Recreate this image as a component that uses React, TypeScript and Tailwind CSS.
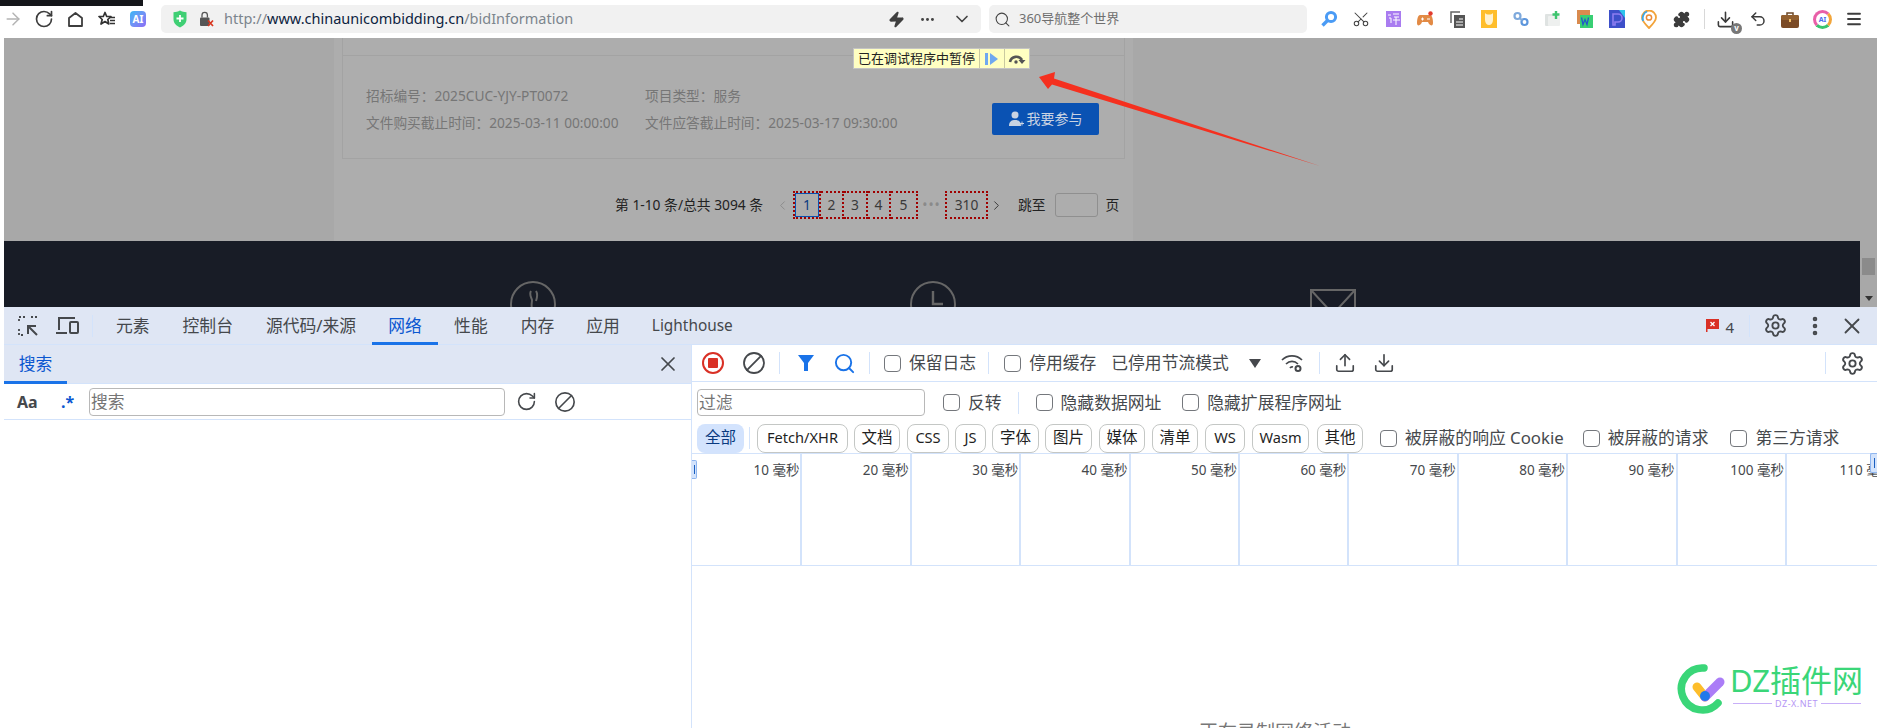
import { ArrowRight, ChevronDown, ChevronLeft, ChevronRight, Download, EllipsisVertical, Menu, Puzzle, RotateCw, Scissors, Search, Settings, Undo2, Upload, X, Zap, Ban, MoreHorizontal } from "lucide-react";

const FONT = "font-['Noto_Sans','Noto_Sans_CJK_SC',sans-serif]";

function Checkbox({ label, className = "" }: { label: string; className?: string }) {
  return (
    <div className={`flex items-center ${className}`}>
      <span className="h-[17px] w-[17px] shrink-0 rounded-[4px] border-[1.5px] border-[#74777c] bg-white" />
      <span className="ml-[8px] whitespace-nowrap text-[16.8px] text-[#46494d]">{label}</span>
    </div>
  );
}

function Divider({ className = "" }: { className?: string }) {
  return <span className={`h-[22px] w-px shrink-0 bg-[#d3e3fb] ${className}`} />;
}

const chips = [
  { label: "Fetch/XHR", w: "w-[91px]", ml: "ml-0", text: "text-[14.6px]" },
  { label: "文档", w: "w-[46px]", ml: "ml-[6px]", text: "text-[15.5px]" },
  { label: "CSS", w: "w-[42px]", ml: "ml-[7px]", text: "text-[14.6px]" },
  { label: "JS", w: "w-[31px]", ml: "ml-[6px]", text: "text-[14.6px]" },
  { label: "字体", w: "w-[47px]", ml: "ml-[6px]", text: "text-[15.5px]" },
  { label: "图片", w: "w-[47px]", ml: "ml-[6px]", text: "text-[15.5px]" },
  { label: "媒体", w: "w-[46px]", ml: "ml-[7px]", text: "text-[15.5px]" },
  { label: "清单", w: "w-[46px]", ml: "ml-[7px]", text: "text-[15.5px]" },
  { label: "WS", w: "w-[40px]", ml: "ml-[7px]", text: "text-[14.6px]" },
  { label: "Wasm", w: "w-[57px]", ml: "ml-[7px]", text: "text-[14.6px]" },
  { label: "其他", w: "w-[46px]", ml: "ml-[8px]", text: "text-[15.5px]" },
];

const tabs = [
  { label: "元素", cls: "ml-[23px]" },
  { label: "控制台", cls: "ml-[33px]" },
  { label: "源代码/来源", cls: "ml-[33px]" },
];

const pages = [
  { n: "2", w: "w-[23px]" },
  { n: "3", w: "w-[24px]" },
  { n: "4", w: "w-[23px]" },
  { n: "5", w: "w-[27px]" },
];

const ticks = [10, 20, 30, 40, 50, 60, 70, 80, 90, 100, 110];

function IconBox({ children, className = "" }: { children: React.ReactNode; className?: string }) {
  return <span className={`flex h-[20px] w-[20px] shrink-0 items-center justify-center ${className}`}>{children}</span>;
}

function ExtensionIcons() {
  return (
    <div className="ml-[12px] flex items-center gap-[12px]">
      <IconBox>
        <svg width="18" height="18" viewBox="0 0 18 18"><circle cx="11" cy="7" r="4.6" fill="none" stroke="#4a9bf5" strokeWidth="3" /><path d="M7.5 10.5 2.5 15.5" stroke="#4a9bf5" strokeWidth="3.4" /></svg>
      </IconBox>
      <IconBox><Scissors size={18} strokeWidth={1.4} color="#444" className="-rotate-90" /></IconBox>
      <IconBox>
        <svg width="15" height="16" viewBox="0 0 15 16"><rect width="15" height="16" fill="#a97cf0" /><path d="M2 4h3M3 7h2v5M7 3h6M8 6h5M7 9h7M10 6v8" stroke="#fff" strokeWidth="1" fill="none" /></svg>
      </IconBox>
      <IconBox>
        <svg width="18" height="17" viewBox="0 0 18 17"><path d="M4 4h10c2 0 3 4 3 8 0 3-2 3-4 1l-1-2H6l-1 2c-2 2-4 2-4-1 0-4 1-8 3-8z" fill="#e28a45" /><circle cx="14.5" cy="2.5" r="2.2" fill="#e23b2e" /><path d="M5 8h3M6.500 6.500v3M11 8h3" stroke="#fff" strokeWidth="1" /></svg>
      </IconBox>
      <IconBox>
        <svg width="15" height="17" viewBox="0 0 15 17"><path d="M1 12V1h9" fill="none" stroke="#666" strokeWidth="1.500" /><rect x="4" y="4" width="11" height="13" fill="#555" /><path d="M9 8h4M6 11h7M6 14h7" stroke="#fff" strokeWidth="1.200" /></svg>
      </IconBox>
      <IconBox>
        <svg width="16" height="18" viewBox="0 0 16 18"><rect width="16" height="18" fill="#ffbe2c" /><path d="M4 3c1 1 2 1.500 4 1.500S11 4 12 3v7c0 3-2 5-4 5s-4-2-4-5z" fill="#fff2d0" /></svg>
      </IconBox>
      <IconBox>
        <svg width="18" height="18" viewBox="0 0 18 18"><circle cx="5.500" cy="6" r="3" fill="none" stroke="#7ea9dc" strokeWidth="2.200" /><circle cx="12.500" cy="12" r="3" fill="none" stroke="#5d96dc" strokeWidth="2.200" /><path d="M7.500 8l3 2.500" stroke="#7ea9dc" strokeWidth="2" /></svg>
      </IconBox>
      <IconBox>
        <svg width="18" height="18" viewBox="0 0 18 18"><rect x="1" y="4" width="13" height="12" rx="1" fill="#dfe3e2" /><rect x="4" y="6" width="12" height="10" rx="1" fill="#eef0ef" /><path d="M12 1v8M8.500 4.500h7" stroke="#3fc46f" strokeWidth="2.400" /></svg>
      </IconBox>
      <IconBox>
        <svg width="16" height="18" viewBox="0 0 16 18"><rect width="13" height="14" fill="#d98a4e" /><rect x="3" y="5" width="13" height="13" fill="#38cf74" /><path d="M4.500 7.500l1.500 7 2-5 2 5 1.500-7" fill="none" stroke="#2456c9" strokeWidth="1.300" /></svg>
      </IconBox>
      <IconBox>
        <svg width="16" height="18" viewBox="0 0 16 18"><rect width="16" height="18" fill="#3d4fc9" /><path d="M10 0h6v8z" fill="#2ec3ec" /><path d="M4 4h5a4 4 0 0 1 0 8H6v3H4z" fill="none" stroke="#8d7cf0" strokeWidth="1.600" /></svg>
      </IconBox>
      <IconBox>
        <svg width="16" height="19" viewBox="0 0 16 19"><path d="M8 18C4 14 1 11 1 7.500a7 7 0 0 1 14 0C15 11 12 14 8 18z" fill="none" stroke="#f2a33a" strokeWidth="1.800" /><path d="M2 11C1 8 2 3 6 1.500" fill="none" stroke="#3aa6e8" strokeWidth="1.800" /><circle cx="8" cy="7.500" r="2.600" fill="none" stroke="#ec8a35" strokeWidth="1.500" /></svg>
      </IconBox>
      <IconBox><Puzzle size={17} fill="#3c3c3c" color="#3c3c3c" /></IconBox>
    </div>
  );
}

export default function App() {
  return (
    <div className={`relative flex h-[728px] w-[1877px] flex-col overflow-hidden bg-white ${FONT}`}>
      {/* browser toolbar */}
      <header className="relative flex h-[38px] shrink-0 items-center bg-white">
        <span className="absolute left-0 top-0 h-[6px] w-[143px] bg-[#15161a]" />
        <ArrowRight size={20} strokeWidth={1.8} color="#b4b4b4" className="ml-[3px] shrink-0" />
        <RotateCw size={20} strokeWidth={2} color="#3d3d3d" className="ml-[11px] shrink-0" />
        <svg width="15" height="15" viewBox="0 0 15 15" className="ml-[14px] shrink-0"><path d="M1 14V6l6.500-5L14 6v8z" fill="none" stroke="#3d3d3d" strokeWidth="1.800" strokeLinejoin="round" /></svg>
        <svg width="18" height="17" viewBox="0 0 18 17" className="ml-[15px] shrink-0"><path d="M7 1.500l1.700 4H13L9.800 8.500l1 4.500L7 10.500 3 13l1.200-4.500L1 5.500h4.300z" fill="none" stroke="#333" strokeWidth="1.700" strokeLinejoin="round" /><path d="M12 6.500h5M12 9.500h5M12 12.500h5" stroke="#333" strokeWidth="1.500" /></svg>
        <span className="ml-[14px] flex h-[16px] w-[16px] shrink-0 items-center justify-center rounded-[4px] bg-gradient-to-br from-[#2fb6f5] to-[#8a6cf5] text-[10px] font-bold leading-none text-white">AI</span>
        <div className="ml-[15px] flex h-[28px] w-[820px] shrink-0 items-center rounded-[5px] bg-[#f1f1f1]">
          <svg width="14" height="18" viewBox="0 0 14 18" className="ml-[12px] shrink-0"><path d="M7 0.500c2 1.300 4 1.700 6.500 1.700v7c0 4-3 6.500-6.500 8.300C3.500 15.700.5 13.200.5 9.200v-7C3 2.200 5 1.800 7 .5z" fill="#3fcf74" /><path d="M7 5v7M3.500 8.500h7" stroke="#fff" strokeWidth="1.800" /></svg>
          <svg width="15" height="16" viewBox="0 0 15 16" className="ml-[12px] shrink-0"><rect x="1" y="6.500" width="9.500" height="8.500" rx="1" fill="#555" /><path d="M3 6.500V4a2.700 2.700 0 0 1 5.400 0v2.500" fill="none" stroke="#555" strokeWidth="1.300" /><path d="M9 9.500l5 5.500M14 9.500l-5 5.500" stroke="#d8361f" strokeWidth="1.700" /></svg>
          <div className="ml-[10px] whitespace-nowrap text-[14.5px] text-[#7c858d]">
            http://<span className="text-[#0d2340]">www.chinaunicombidding.cn</span>/bidInformation
          </div>
          <Zap size={17} fill="#3f3f3f" color="#3f3f3f" className="ml-auto mr-[14px] shrink-0" />
          <MoreHorizontal size={17} color="#444" strokeWidth={2.200} className="mr-[16px] shrink-0" />
          <ChevronDown size={20} color="#444" strokeWidth={2} className="mr-[9px] shrink-0" />
        </div>
        <div className="ml-[8px] flex h-[28px] w-[318px] shrink-0 items-center rounded-[5px] bg-[#f1f1f1] pl-[5px]">
          <Search size={17} strokeWidth={1.500} color="#444" className="shrink-0" />
          <span className="ml-[8px] whitespace-nowrap text-[13px] text-[#6f6f6f]">360导航整个世界</span>
        </div>
        <ExtensionIcons />
        <span className="ml-[13px] h-[20px] w-px shrink-0 bg-[#d8d8d8]" />
        <div className="relative ml-[11px] shrink-0">
          <Download size={19} strokeWidth={2} color="#3a3a3a" />
          <span className="absolute -bottom-[5px] -right-[7px] flex h-[11px] w-[11px] items-center justify-center rounded-full bg-[#777] text-[8px] font-bold leading-none text-white">v</span>
        </div>
        <Undo2 size={18} strokeWidth={2} color="#3a3a3a" className="ml-[14px] shrink-0" />
        <svg width="18" height="17" viewBox="0 0 18 17" className="ml-[14px] shrink-0"><path d="M6 4V2h6v2" fill="none" stroke="#6e4a2a" strokeWidth="1.500" /><rect y="4" width="18" height="13" rx="2" fill="#7a4a26" /><rect y="4" width="18" height="5" rx="2" fill="#92602f" /><rect x="8" y="8" width="2" height="3" fill="#f3c26b" /></svg>
        <span className="ml-[14px] flex h-[19px] w-[19px] shrink-0 items-center justify-center rounded-full border-[3px] border-[#e85fa8] border-b-[#39c56d] border-r-[#f2a53a] text-[7px] font-bold leading-none text-[#4b6cf0]">AI</span>
        <Menu size={18} strokeWidth={2.400} color="#3d3d3d" className="ml-[13px] shrink-0" />
      </header>

      {/* inspected page */}
      <div className="flex h-[269px] shrink-0">
        <div className="w-[4px] shrink-0 bg-white" />
        <div className="flex min-w-0 flex-1 flex-col">
          <div className="flex h-[203px] shrink-0 bg-[#a8a8a8] pl-[330px]">
            <div className="h-full w-[799px] shrink-0 bg-[#adadad] px-[8px]">
              <div className="flex h-[121px] flex-col border-x border-b border-[#a3a3a3]">
                <div className="h-[18px] shrink-0 border-b border-[#a3a3a3]" />
                <div className="flex-1 text-[13.7px] text-[#767676]">
                  <div className="flex pl-[23px] pt-[31px] leading-[18px]">
                    <span className="w-[279px] whitespace-nowrap">招标编号：2025CUC-YJY-PT0072</span>
                    <span className="whitespace-nowrap">项目类型：服务</span>
                  </div>
                  <div className="flex pl-[23px] pt-[9px] leading-[18px]">
                    <span className="w-[279px] whitespace-nowrap">文件购买截止时间：2025-03-11 00:00:00</span>
                    <span className="w-[347px] whitespace-nowrap">文件应答截止时间：2025-03-17 09:30:00</span>
                    <button className="-mt-[11px] flex h-[32px] w-[107px] shrink-0 items-center justify-center rounded-[2px] bg-[#0a52b3] text-[14px] text-[#c9d3e2]">
                      <svg width="15" height="16" viewBox="0 0 15 16" className="mr-[3px]"><circle cx="6" cy="4" r="3.500" fill="#c9d3e2" /><path d="M0 15c0-5 3-6 6-6s6 1 6 6z" fill="#c9d3e2" /><path d="M11 12.500h4M13 10.500v4" stroke="#c9d3e2" strokeWidth="1" /></svg>
                      我要参与
                    </button>
                  </div>
                </div>
              </div>
              <div className="mt-[32px] flex h-[28px] items-center text-[13.8px] text-[#222]">
                <span className="ml-[273px] w-[149px] whitespace-nowrap">第 1-10 条/总共 3094 条</span>
                <ChevronLeft size={15} strokeWidth={1.500} color="#8a8a8a" className="ml-[11px] shrink-0" />
                <div className="ml-[3px] flex h-[28px] w-[28px] shrink-0 items-center justify-center border-2 border-dotted border-[#a00000]">
                  <span className="flex h-[24px] w-[24px] items-center justify-center border border-[#0a52b3] text-[#0a3a80]">1</span>
                </div>
                {pages.map((p) => (
                  <span key={p.n} className={`flex h-[28px] ${p.w} shrink-0 items-center justify-center border-2 border-l-0 border-dotted border-[#a00000] text-[#3a3a3a]`}>
                    {p.n}
                  </span>
                ))}
                <span className="w-[27px] shrink-0 text-center tracking-[1px] text-[#8a8a8a]">•••</span>
                <span className="flex h-[28px] w-[43px] shrink-0 items-center justify-center border-2 border-dotted border-[#a00000] text-[#3a3a3a]">310</span>
                <ChevronRight size={15} strokeWidth={1.500} color="#333" className="ml-[1px] shrink-0" />
                <span className="ml-[14px] whitespace-nowrap">跳至</span>
                <span className="ml-[9px] h-[24px] w-[43px] shrink-0 rounded-[3px] border border-[#8f8f8f]" />
                <span className="ml-[8px]">页</span>
              </div>
            </div>
          </div>
          <div className="flex h-[66px] shrink-0 overflow-hidden bg-[#181c26] pl-[506px] pt-[40px]">
            <svg width="46" height="46" viewBox="0 0 46 46" className="shrink-0"><circle cx="23" cy="23" r="22" fill="none" stroke="#666" strokeWidth="2" /><path d="M21 10c-2 3 0 6 1 9 0 3-1 5 0 8M26 10c2 3 1 7 0 10" fill="none" stroke="#666" strokeWidth="2" /></svg>
            <svg width="46" height="46" viewBox="0 0 46 46" className="ml-[354px] shrink-0"><circle cx="23" cy="23" r="22" fill="none" stroke="#666" strokeWidth="2" /><path d="M23 10v13h10" fill="none" stroke="#666" strokeWidth="2.400" /></svg>
            <svg width="46" height="30" viewBox="0 0 46 30" className="ml-[354px] mt-[8px] shrink-0"><rect x="1" y="1" width="44" height="30" fill="none" stroke="#666" strokeWidth="2" /><path d="M1 1l22 24L45 1" fill="none" stroke="#666" strokeWidth="2" /></svg>
          </div>
        </div>
        <div className="flex w-[17px] shrink-0 flex-col items-center bg-[#a8a8a8]">
          <span className="mt-[220px] h-[17px] w-[13px] bg-[#8b8b8b]" />
          <span className="mt-[21px] h-0 w-0 border-x-[4px] border-t-[5px] border-x-transparent border-t-[#333]" />
        </div>
      </div>

      {/* devtools */}
      <div className="flex min-h-0 flex-1 pl-[4px] text-[16.8px] text-[#45484c]">
        <div className="flex min-w-0 flex-1 flex-col">
          <nav className="flex h-[38px] shrink-0 items-center border-b border-[#d3e3fb] bg-[#dfe6f4]">
            <svg width="22" height="22" viewBox="0 0 22 22" className="ml-[13px] shrink-0"><path d="M8 2H2v6M14 2h6M2 14v6h6" fill="none" stroke="#45484c" strokeWidth="1.800" strokeDasharray="2 2" /><path d="M20 20 11 11M11 19v-8h8" fill="none" stroke="#45484c" strokeWidth="2" /></svg>
            <svg width="24" height="20" viewBox="0 0 24 20" className="ml-[16px] shrink-0"><path d="M4 14V2h16M1 17h11" fill="none" stroke="#45484c" strokeWidth="2" /><rect x="15" y="6" width="8" height="11" rx="1" fill="none" stroke="#45484c" strokeWidth="2" /></svg>
            <span className="ml-[13px] h-[22px] w-px shrink-0 bg-[#d3e3fb]" />
            {tabs.map((t) => (
              <span key={t.label} className={`${t.cls} whitespace-nowrap`}>{t.label}</span>
            ))}
            <div className="relative ml-[16px] flex h-full w-[66px] shrink-0 items-center justify-center text-[#0b57d0]">
              网络
              <span className="absolute -bottom-px left-0 h-[3px] w-full bg-[#1a73e8]" />
            </div>
            <span className="ml-[16px]">性能</span>
            <span className="ml-[33px]">内存</span>
            <span className="ml-[32px]">应用</span>
            <span className="ml-[32px] text-[15.4px]">Lighthouse</span>
            <div className="ml-auto flex items-center">
              <svg width="13" height="15" viewBox="0 0 13 15" className="shrink-0"><path d="M0 1h13v10H1.500v3H0z" fill="#d93025" /><path d="M4.500 4l4 4M8.500 4l-4 4" stroke="#fff" strokeWidth="1.300" /></svg>
              <span className="ml-[6px] mt-[3px] text-[15px]">4</span>
              <span className="ml-[15px] h-[22px] w-px bg-[#d3e3fb]" />
              <Settings size={25} strokeWidth={1.800} className="ml-[13px]" />
              <EllipsisVertical size={24} strokeWidth={2.600} className="ml-[15px]" />
              <X size={26} strokeWidth={1.700} className="ml-[12px] mr-[12px]" />
            </div>
          </nav>
          <div className="flex min-h-0 flex-1">
            {/* search drawer */}
            <aside className="flex w-[688px] shrink-0 flex-col border-r border-[#d3e3fb]">
              <div className="flex h-[39px] shrink-0 items-center border-b border-[#d3e3fb] bg-[#dfe6f4]">
                <div className="relative flex h-full w-[63px] items-center justify-center text-[#0b57d0]">
                  搜索
                  <span className="absolute -bottom-px left-0 h-[3px] w-full bg-[#1a73e8]" />
                </div>
                <X size={24} strokeWidth={1.700} className="ml-auto mr-[11px]" />
              </div>
              <div className="flex h-[36px] shrink-0 items-center border-b border-[#d3e3fb]">
                <span className="ml-[13px] w-[21px] text-[16px] font-bold leading-none">Aa</span>
                <span className="ml-[23px] w-[12px] text-[16px] font-bold leading-none text-[#0b57d0]">.*</span>
                <div className="ml-[16px] flex h-[28px] w-[416px] items-center rounded-[4px] border border-[#b8b8b8] pl-[1px] text-[#757575]">搜索</div>
                <RotateCw size={21} strokeWidth={1.800} className="ml-[11px] shrink-0" />
                <Ban size={22} strokeWidth={1.800} className="ml-[17px] shrink-0 -scale-x-100" />
              </div>
            </aside>
            {/* network panel */}
            <section className="relative flex min-w-0 flex-1 flex-col">
              <div className="flex h-[37px] shrink-0 items-center border-b border-[#d3e3fb]">
                <span className="ml-[10px] flex h-[22px] w-[22px] shrink-0 items-center justify-center rounded-full border-2 border-[#d93025]"><span className="h-[10px] w-[10px] rounded-[1px] bg-[#d93025]" /></span>
                <Ban size={24} strokeWidth={1.800} className="ml-[18px] shrink-0 -scale-x-100" />
                <Divider className="ml-[13px]" />
                <svg width="16" height="18" viewBox="0 0 16 18" className="ml-[18px] shrink-0"><path d="M0 1h16l-6 8v8H6V9z" fill="#1a73e8" /></svg>
                <Search size={23} strokeWidth={2} color="#1a73e8" className="ml-[19px] shrink-0" />
                <Divider className="ml-[13px]" />
                <Checkbox label="保留日志" className="ml-[14px]" />
                <Divider className="ml-[12px]" />
                <Checkbox label="停用缓存" className="ml-[15px]" />
                <span className="ml-[15px] whitespace-nowrap">已停用节流模式</span>
                <span className="ml-[20px] h-0 w-0 border-x-[6px] border-t-[9px] border-x-transparent border-t-[#45484c]" />
                <svg width="22" height="20" viewBox="0 0 22 20" className="ml-[20px] shrink-0"><path d="M1 7c5.500-5.500 14.500-5.500 20 0M5 11c3.500-3.500 8.500-3.500 12 0M9 15c.7-1 2-1.300 3-1" fill="none" stroke="#45484c" strokeWidth="1.700" /><circle cx="17" cy="15.500" r="2.500" fill="none" stroke="#45484c" strokeWidth="2" /></svg>
                <Divider className="ml-[16px]" />
                <Upload size={22} strokeWidth={1.800} className="ml-[14px] shrink-0" />
                <Download size={22} strokeWidth={1.800} className="ml-[17px] shrink-0" />
                <Divider className="ml-auto" />
                <Settings size={25} strokeWidth={1.800} className="ml-[14px] mr-[12px] shrink-0" />
              </div>
              <div className="flex h-[41px] shrink-0 items-center">
                <div className="ml-[5px] flex h-[27px] w-[228px] shrink-0 items-center rounded-[4px] border border-[#b8b8b8] pl-[1px] text-[#757575]">过滤</div>
                <Checkbox label="反转" className="ml-[18px]" />
                <Divider className="ml-[16px]" />
                <Checkbox label="隐藏数据网址" className="ml-[17px]" />
                <Checkbox label="隐藏扩展程序网址" className="ml-[21px]" />
              </div>
              <div className="flex h-[30px] shrink-0 items-center text-[#1f1f1f]">
                <span className="ml-[5px] flex h-[29px] w-[47px] shrink-0 items-center justify-center rounded-[8px] bg-[#d3e3fd] text-[15.5px] text-[#0a3a80]">全部</span>
                <span className="ml-[5px] mr-[7px] h-[22px] w-px shrink-0 bg-[#d3e3fb]" />
                {chips.map((c) => (
                  <span key={c.label} className={`flex h-[29px] ${c.w} ${c.ml} ${c.text} shrink-0 items-center justify-center rounded-[8px] border border-[#c4c7c5]`}>
                    {c.label}
                  </span>
                ))}
                <Checkbox label="被屏蔽的响应 Cookie" className="ml-[17px]" />
                <Checkbox label="被屏蔽的请求" className="ml-[19px]" />
                <Checkbox label="第三方请求" className="ml-[22px]" />
              </div>
              <div className="flex h-[113px] shrink-0 overflow-hidden border-y border-[#d3e3fb] pl-px">
                {ticks.map((t) => (
                  <div key={t} className="h-full w-[109.4px] shrink-0 border-r-2 border-[#d3e3fb] pr-[1px] pt-[7px] text-right text-[13.5px] leading-[18px] text-[#45484c]">
                    {t} 毫秒
                  </div>
                ))}
              </div>
              <span className="absolute left-0 top-[115px] flex h-[19px] w-[5px] items-center justify-center rounded-r-[2px] border border-l-0 border-[#8fb6f0] bg-[#d3e3fb]">
                <span className="h-[9px] w-px bg-[#1a5fc0]" />
              </span>
              <span className="absolute right-0 top-[108px] flex h-[20px] w-[7px] items-center justify-center rounded-l-[2px] border border-r-0 border-[#8fb6f0] bg-[#d3e3fb]">
                <span className="h-[10px] w-px bg-[#1a5fc0]" />
              </span>
              <div className="flex-1 pl-[507px] pt-[157px] text-[19px] text-[#777]">
                <span className="block whitespace-nowrap leading-none">正在录制网络活动…</span>
              </div>
            </section>
          </div>
        </div>
      </div>

      {/* annotation arrow over the screenshot */}
      <svg width="300" height="100" viewBox="0 0 300 100" className="absolute left-[1035px] top-[70px]">
        <path d="M4 7 20 2 19 8.500 285 96 17 14.500 13 19z" fill="#f5301f" />
      </svg>

      {/* debugger paused bubble */}
      <div className="absolute left-[853px] top-[48px] flex h-[21px] w-[177px] items-center border border-[#c4c4c4] bg-[#ffffc2] text-[13px] text-[#222]">
        <span className="w-[125px] whitespace-nowrap pl-[4px]">已在调试程序中暂停</span>
        <span className="flex h-full w-[25px] items-center justify-center border-l border-[#c9c9a0]">
          <svg width="14" height="12" viewBox="0 0 14 12"><rect width="3" height="12" fill="#6fa8f0" /><path d="M5 0l8 6-8 6z" fill="#6fa8f0" /></svg>
        </span>
        <span className="flex h-full flex-1 items-center justify-center border-l border-[#c9c9a0]">
          <svg width="18" height="11" viewBox="0 0 18 11"><path d="M2 9a6.500 6.500 0 0 1 12-2" fill="none" stroke="#555" strokeWidth="2.600" /><path d="M10.500 7h7l-3.500 4z" fill="#555" /><circle cx="8" cy="9" r="1.700" fill="#555" /></svg>
        </span>
      </div>

      {/* watermark */}
      <div className="absolute left-[1677px] top-[663px] flex items-start">
        <svg width="50" height="52" viewBox="0 0 50 52" className="shrink-0">
          <path d="M27 5A21 21 0 1 0 41 40" fill="none" stroke="#3ad678" strokeWidth="7.500" strokeLinecap="round" />
          <path d="M20 24l8 10" stroke="#fdbd2b" strokeWidth="9" strokeLinecap="round" />
          <path d="M28 34l15-15" stroke="#ab7df7" strokeWidth="9" strokeLinecap="round" />
          <circle cx="28" cy="33" r="5" fill="#2079ea" />
        </svg>
        <div className="ml-[3px] flex flex-col items-center">
          <span className="whitespace-nowrap text-[31px] leading-[34px] text-[#3ad678]">DZ插件网</span>
          <div className="mt-[2px] flex w-[128px] items-center text-[9px] leading-none text-[#b596f5]">
            <span className="h-px flex-1 bg-[#c8aff8]" />
            <span className="mx-[3px] tracking-[0.5px]">DZ-X.NET</span>
            <span className="h-px flex-1 bg-[#c8aff8]" />
          </div>
        </div>
      </div>
    </div>
  );
}
